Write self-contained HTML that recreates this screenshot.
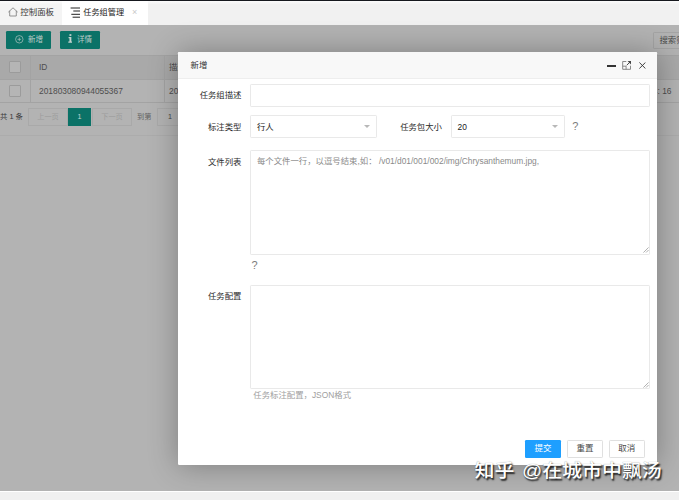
<!DOCTYPE html>
<html lang="zh-CN">
<head>
<meta charset="utf-8">
<title>任务组管理</title>
<style>
*{box-sizing:border-box;margin:0;padding:0}
html,body{width:679px;height:500px;overflow:hidden;background:#b3b3b3}
body{position:relative;font-family:"Liberation Sans","Noto Sans CJK SC",sans-serif;font-size:8.4px;color:#333;-webkit-font-smoothing:antialiased}
.abs{position:absolute}
.t{position:absolute;white-space:nowrap;line-height:1}
/* top */
#topbar{left:0;top:0;width:679px;height:1.2px;background:#16181e}
#tabbar{left:0;top:1px;width:679px;height:24px;background:linear-gradient(#fbfbfb 0,#f1f1f1 3.5px,#f1f1f1 100%)}
#tab1{left:0;top:1px;width:62.3px;height:24px;background:linear-gradient(#fcfcfc 0,#f4f4f4 3.5px,#f4f4f4 100%)}
#tab2{left:62.3px;top:1px;width:85.7px;height:24px;background:#fff}
/* page (dimmed) */
#page{left:0;top:25px;width:679px;height:466px;background:#b3b3b3;overflow:hidden}
.btn{position:absolute;height:18px;border-radius:1.2px;background:#0b7267;color:#bccbc8;font-size:7.5px}
.tbl-line{position:absolute;background:#a3a3a3}
.cb{position:absolute;width:12px;height:12px;border:1px solid #9b9b9b;border-radius:1px;background:#b5b5b5}
.pg{position:absolute;top:83px;height:18px;border:1px solid #a9a9a9;background:#b3b3b3;font-size:7.2px;color:#9c9c9c;text-align:center;line-height:16px}
/* modal */
#modal{left:178px;top:52px;width:479px;height:413px;background:#fff;box-shadow:0.6px 0.6px 30px rgba(0,0,0,.3);border-radius:1.2px}
#mtitle{left:0;top:0;width:479px;height:27px;background:#f8f8f8;border-bottom:1px solid #eee;border-radius:1.2px 1.2px 0 0}
.inp{position:absolute;border:1px solid #e9e9e9;border-radius:1.2px;background:#fff}
.lbl{position:absolute;white-space:nowrap;line-height:1;font-size:8.4px;color:#2b2b2b;text-align:right;width:60px}
.mbtn{position:absolute;top:388px;height:18px;border-radius:1.2px;font-size:8.5px;text-align:center;line-height:17px}
/* footer */
#foot{left:0;top:491px;width:679px;height:9px;background:#f0f0f0;border-top:1.5px solid #fff}
#wm{left:474.5px;top:463.2px;font-size:19.95px;font-weight:500;word-spacing:2px;color:#fff;font-family:"Liberation Sans","Noto Sans CJK SC",sans-serif;text-shadow:1.3px 1.5px 1.6px rgba(0,0,0,.8),0 0 1px rgba(0,0,0,.45);transform:scaleY(.9);transform-origin:0 0}
</style>
</head>
<body>

<div class="abs" id="page">
  <!-- toolbar buttons -->
  <div class="btn" style="left:6px;top:6px;width:45px">
    <svg class="abs" style="left:9.2px;top:4.2px" width="8.6" height="8.6" viewBox="0 0 9 9"><circle cx="4.5" cy="4.5" r="3.9" fill="none" stroke="#b9c9c6" stroke-width=".7"/><path d="M4.5 2.6v3.8M2.6 4.5h3.8" stroke="#b9c9c6" stroke-width=".7"/></svg>
    <span class="t" style="left:22px;top:5.4px">新增</span>
  </div>
  <div class="btn" style="left:60px;top:6px;width:40px">
    <svg class="abs" style="left:7.7px;top:3.4px" width="4.8" height="9" viewBox="0 0 5 9"><rect x="1.5" y="0" width="2" height="1.8" fill="#c3d1ce"/><path d="M0.6 3H3.5V7.7H4.7V9H0.3V7.7H1.5V4.2H0.6Z" fill="#c3d1ce"/></svg>
    <span class="t" style="left:17px;top:5.4px">详情</span>
  </div>
  <div class="abs" style="left:653px;top:6.5px;width:40px;height:17px;border:1px solid #a4a4a4;border-radius:1.2px;background:#b3b3b3"></div>
  <span class="t" style="left:659.5px;top:11px;font-size:8.4px;color:#4a4a4a">搜索筛选</span>

  <!-- table -->
  <div class="abs" style="left:0;top:30px;width:679px;height:24px;background:#a9a9a9"></div>
  <div class="tbl-line" style="left:0;top:30px;width:679px;height:1px"></div>
  <div class="tbl-line" style="left:0;top:53.5px;width:679px;height:1px"></div>
  <div class="tbl-line" style="left:0;top:77px;width:679px;height:1px"></div>
  <div class="tbl-line" style="left:29.5px;top:30px;width:1px;height:48px"></div>
  <div class="tbl-line" style="left:163.5px;top:30px;width:1px;height:48px"></div>
  <div class="cb" style="left:9px;top:36px"></div>
  <div class="cb" style="left:9px;top:59.5px"></div>
  <span class="t" style="left:39px;top:38px;font-size:8.4px;color:#4e4e4e">ID</span>
  <span class="t" style="left:39px;top:61.5px;font-size:8.4px;color:#4e4e4e">201803080944055367</span>
  <span class="t" style="left:169px;top:37.5px;font-size:8.4px;color:#4e4e4e">描述</span>
  <span class="t" style="left:169px;top:61.5px;font-size:8.4px;color:#4e4e4e">2018</span>
  <span class="t" style="left:652.8px;top:61.5px;font-size:8.4px;color:#4e4e4e">4:<span style="margin-left:2.4px">16</span></span>

  <!-- pagination -->
  <span class="t" style="left:0;top:88px;font-size:7.4px;color:#3a3a3a">共 1 条</span>
  <div class="pg" style="left:28px;width:40px">上一页</div>
  <div class="pg" style="left:68px;width:23px;background:#0b7267;border-color:#0b7267;color:#c5d2d0">1</div>
  <div class="pg" style="left:92px;width:40px">下一页</div>
  <span class="t" style="left:137px;top:88px;font-size:7.2px;color:#626262">到第</span>
  <div class="pg" style="left:157px;width:26px;color:#444;text-align:left;padding-left:10px">1</div>
  <div class="tbl-line" style="left:0;top:110px;width:679px;height:1px;background:#acacac"></div>
</div>

<!-- parent chrome (not dimmed) -->
<div class="abs" id="tabbar"></div>
<div class="abs" id="tab1">
  <svg class="abs" style="left:8.4px;top:5.5px" width="10" height="10" viewBox="0 0 10 10"><path d="M0.6 4.9 L5 0.8 L9.4 4.9 M1.7 4.2 V9 H8.3 V4.2" fill="none" stroke="#7a7a7a" stroke-width=".8" stroke-linejoin="round" stroke-linecap="round"/></svg>
  <span class="t" style="left:20.3px;top:7.2px;color:#3a3a3a;font-size:8.45px">控制面板</span>
</div>
<div class="abs" id="tab2">
  <svg class="abs" style="left:7.7px;top:5.6px" width="11" height="12" viewBox="0 0 11 12"><path d="M0.6 1H10M3.3 4H10M1.3 7.3H10M2.6 10.2H10" stroke="#222" stroke-width="1"/></svg>
  <span class="t" style="left:20.9px;top:7.5px;color:#222;font-size:8.2px">任务组管理</span>
  <span class="t" style="left:69.7px;top:6.6px;color:#c8c8c8;font-size:9px">×</span>
</div>
<div class="abs" id="topbar"></div>

<!-- modal -->
<div class="abs" id="modal">
  <div class="abs" id="mtitle"></div>
  <span class="t" style="left:12.6px;top:8.6px;font-size:8.4px;color:#333">新增</span>
  <!-- window icons -->
  <div class="abs" style="left:429px;top:13.4px;width:8.8px;height:1.3px;background:#333"></div>
  <svg class="abs" style="left:444.2px;top:9px" width="9.2" height="8.8" viewBox="0 0 9 9"><path d="M4.2 0.5H0.5V8.5H8.5V4.8" fill="none" stroke="#7a7a7a" stroke-width=".9"/><path d="M0.5 5.3H4V8.5" fill="none" stroke="#7a7a7a" stroke-width=".9"/><path d="M5.5 0H9V3.5Z" fill="#444"/><path d="M8 1L4.6 4.4" stroke="#444" stroke-width="1"/></svg>
  <svg class="abs" style="left:461.1px;top:9.8px" width="6.8" height="7" viewBox="0 0 7 7"><path d="M0.4 0.4L6.6 6.6M6.6 0.4L0.4 6.6" stroke="#333" stroke-width=".95"/></svg>

  <!-- row 1 -->
  <span class="lbl" style="left:3.5px;top:39px">任务组描述</span>
  <div class="inp" style="left:72px;top:32px;width:400px;height:23px"></div>
  <!-- row 2 -->
  <span class="lbl" style="left:3.5px;top:70.6px">标注类型</span>
  <div class="inp" style="left:72px;top:63px;width:126.5px;height:23px"></div>
  <span class="t" style="left:79px;top:71px;font-size:8.4px;color:#222">行人</span>
  <div class="abs" style="left:186px;top:73.2px;border:3.6px solid transparent;border-top:3.6px solid #b8b8b8;border-bottom:0"></div>
  <span class="lbl" style="left:204px;top:71px">任务包大小</span>
  <div class="inp" style="left:272.5px;top:63px;width:114.5px;height:23px"></div>
  <span class="t" style="left:279.5px;top:71.2px;font-size:8.4px;color:#222">20</span>
  <div class="abs" style="left:374.3px;top:73.2px;border:3.6px solid transparent;border-top:3.6px solid #b8b8b8;border-bottom:0"></div>
  <span class="t" style="left:394.2px;top:68.7px;font-size:11px;color:#7c7c7c">?</span>
  <!-- row 3 -->
  <span class="lbl" style="left:3.5px;top:105.5px">文件列表</span>
  <div class="inp" style="left:72px;top:98px;width:400px;height:104.6px"></div>
  <span class="t" style="left:79px;top:104.8px;font-size:8.4px;color:#8a8a8a">每个文件一行，以逗号结束,如： /v01/d01/001/002/img/Chrysanthemum.jpg,</span>
  <svg class="abs" style="left:465px;top:195px" width="6" height="6" viewBox="0 0 7 7"><path d="M6.5 0.5L0.5 6.5M6.5 3.5L3.5 6.5" stroke="#9a9a9a" stroke-width=".9"/></svg>
  <span class="t" style="left:73.6px;top:207.9px;font-size:11px;color:#7c7c7c">?</span>
  <!-- row 4 -->
  <span class="lbl" style="left:3.5px;top:240.1px">任务配置</span>
  <div class="inp" style="left:72px;top:233px;width:400px;height:104px"></div>
  <svg class="abs" style="left:465px;top:330px" width="6" height="6" viewBox="0 0 7 7"><path d="M6.5 0.5L0.5 6.5M6.5 3.5L3.5 6.5" stroke="#9a9a9a" stroke-width=".9"/></svg>
  <span class="t" style="left:75.3px;top:339.2px;font-size:8.4px;color:#a0a0a0">任务标注配置，JSON格式</span>

  <!-- buttons -->
  <div class="mbtn" style="left:347px;width:36.2px;background:#1e9fff;color:#fff">提交</div>
  <div class="mbtn" style="left:389.3px;width:35.6px;background:#fff;border:1px solid #e0e0e0;color:#484848;line-height:15.5px">重置</div>
  <div class="mbtn" style="left:430.6px;width:36.4px;background:#fff;border:1px solid #e0e0e0;color:#484848;line-height:15.5px">取消</div>
</div>

<div class="abs" id="foot"></div>
<span class="t" id="wm">知乎 @在城市中飘汤</span>

</body>
</html>
